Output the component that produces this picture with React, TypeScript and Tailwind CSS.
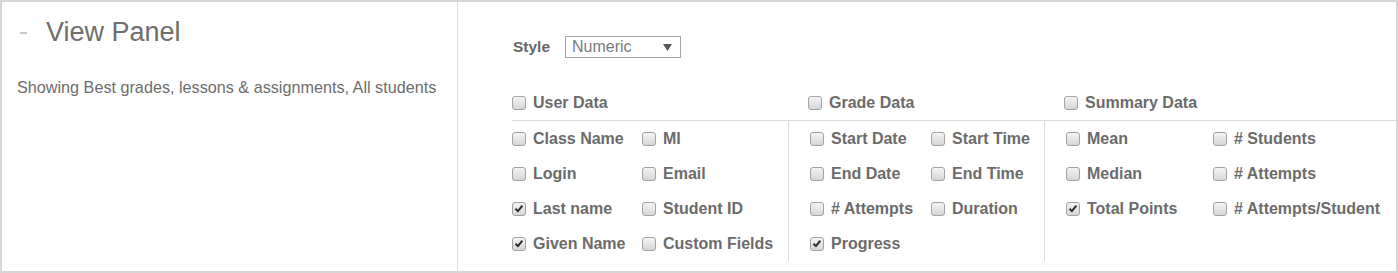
import React from "react";

type Item = { label: string; checked?: boolean };

function Box({ checked }: { checked?: boolean }) {
  return (
    <span className="flex h-[14px] w-[14px] shrink-0 items-center justify-center rounded-[3px] border border-[#a2a2a2] bg-linear-to-b from-[#f4f4f4] to-[#d6d6d6]">
      {checked && (
        <svg width="10" height="9" viewBox="0 0 10 9">
          <path d="M1.5 4.8 L3.9 7.1 L8.4 1.6" stroke="#2a2a2a" strokeWidth="2" fill="none" />
        </svg>
      )}
    </span>
  );
}

function Check({ item, width }: { item?: Item; width: string }) {
  return (
    <div className={`flex items-center gap-[7px] ${width}`}>
      {item && (
        <>
          <Box checked={item.checked} />
          <span className="whitespace-nowrap text-[16px] font-bold leading-none text-[#6b6b6b]">
            {item.label}
          </span>
        </>
      )}
    </div>
  );
}

const groups = [
  {
    cell: "w-[277px] border-r border-[#dcdcdc]",
    pad: "pl-0",
    col: "w-[130px]",
    rows: [
      [{ label: "Class Name" }, { label: "MI" }],
      [{ label: "Login" }, { label: "Email" }],
      [{ label: "Last name", checked: true }, { label: "Student ID" }],
      [{ label: "Given Name", checked: true }, { label: "Custom Fields" }],
    ] as (Item | undefined)[][],
  },
  {
    cell: "w-[256px] border-r border-[#dcdcdc]",
    pad: "pl-[21px]",
    col: "w-[121px]",
    rows: [
      [{ label: "Start Date" }, { label: "Start Time" }],
      [{ label: "End Date" }, { label: "End Time" }],
      [{ label: "# Attempts" }, { label: "Duration" }],
      [{ label: "Progress", checked: true }, undefined],
    ] as (Item | undefined)[][],
  },
  {
    cell: "flex-1",
    pad: "pl-[21px]",
    col: "w-[147px]",
    rows: [
      [{ label: "Mean" }, { label: "# Students" }],
      [{ label: "Median" }, { label: "# Attempts" }],
      [{ label: "Total Points", checked: true }, { label: "# Attempts/Student" }],
    ] as (Item | undefined)[][],
  },
];

export default function App() {
  return (
    <div
      className="flex h-[273px] w-[1398px] border-2 border-[#d6d6d6] bg-white"
      style={{ fontFamily: '"Liberation Sans", Arial, sans-serif' }}
    >
      <div className="w-[456px] shrink-0 border-r border-[#dcdcdc] pl-[15px] pt-[15px]">
        <div className="flex items-center">
          <span className="ml-[3px] h-[2px] w-[7px] bg-[#c8c8c8]" />
          <h1 className="ml-[19px] text-[27px] leading-[31px] text-[#6e6e6e]">View Panel</h1>
        </div>
        <p className="mt-[29px] text-[16.2px] leading-[20px] text-[#6d6d6d]">
          Showing Best grades, lessons &amp; assignments, All students
        </p>
      </div>

      <div className="flex-1 pl-[54px] pt-[34px]">
        <div className="flex items-center">
          <span className="w-[53px] pl-[1px] text-[15.5px] font-bold leading-none text-[#666]">Style</span>
          <div className="flex h-[22px] w-[116px] items-center justify-between border border-[#a6a6a6] pl-[6px] pr-[8px]">
            <span className="text-[16px] leading-none text-[#7a7a7a]">Numeric</span>
            <svg width="9" height="7" viewBox="0 0 9 7">
              <path d="M0 0 H9 L4.5 7 Z" fill="#5a5a5a" />
            </svg>
          </div>
        </div>

        <div className="mt-[27px] flex h-[36px] items-center border-b border-[#dcdcdc]">
          <div className="w-[296px]">
            <Check item={{ label: "User Data" }} width="w-full" />
          </div>
          <div className="w-[256px]">
            <Check item={{ label: "Grade Data" }} width="w-full" />
          </div>
          <div className="flex-1">
            <Check item={{ label: "Summary Data" }} width="w-full" />
          </div>
        </div>

        <div className="flex">
          {groups.map((g, gi) => (
            <div key={gi} className={`${g.cell} ${g.pad} h-[140px]`}>
              {g.rows.map((r, ri) => (
                <div key={ri} className="flex h-[35px] items-center">
                  <Check item={r[0]} width={g.col} />
                  <Check item={r[1]} width="flex-1" />
                </div>
              ))}
            </div>
          ))}
        </div>
      </div>
    </div>
  );
}
